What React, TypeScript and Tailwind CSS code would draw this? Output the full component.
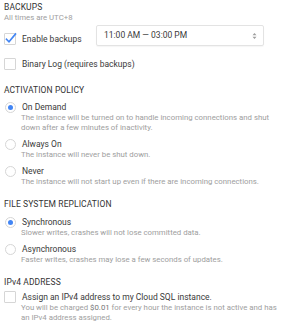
import React from 'react'

const Checkbox = ({ checked }: { checked?: boolean }) => (
  <svg width="13" height="13" viewBox="0 0 13 13" className="shrink-0 overflow-visible">
    <rect x="0.5" y="1.5" width="11" height="11" rx="0.5" fill="white" stroke="#d6d6d6" />
    {checked && (
      <path d="M2.5 7.2 L5 9.8 L11.5 2" fill="none" stroke="#4285f4" strokeWidth="1.6" strokeLinecap="square" />
    )}
  </svg>
)

const Radio = ({ checked }: { checked?: boolean }) => (
  <span className="flex h-[11px] w-[11px] shrink-0 items-center justify-center rounded-full border border-[#d6d6d6] bg-white">
    {checked && <span className="h-[5px] w-[5px] rounded-full bg-[#4285f4]" />}
  </span>
)

const Header = ({ children, className = '' }: { children: React.ReactNode; className?: string }) => (
  <div className={`text-[8.5px] leading-[11px] tracking-[0.1px] text-[#333] ${className}`}>{children}</div>
)

const Desc = ({ children, className = '' }: { children: React.ReactNode; className?: string }) => (
  <p className={`pl-[17px] text-[7.8px] leading-[10px] text-[#9e9e9e] ${className}`}>{children}</p>
)

const Option = ({ label, desc, checked, className = '' }: { label: string; desc: React.ReactNode; checked?: boolean; className?: string }) => (
  <div className={className}>
    <div className="flex items-center gap-[6px] pl-[1px]">
      <Radio checked={checked} />
      <span className="text-[8.5px] leading-[12px] text-[#3a3a3a]">{label}</span>
    </div>
    <Desc>{desc}</Desc>
  </div>
)

export default function App() {
  return (
    <div className="h-[330px] w-[284px] overflow-hidden bg-white pl-[4px] pt-[2px] font-['Roboto',sans-serif]">
      <Header>BACKUPS</Header>
      <div className="text-[7.8px] leading-[10px] text-[#9e9e9e]">All times are UTC+8</div>

      <div className="mt-[2px] flex items-start">
        <div className="mt-[7px] flex w-[92px] items-center gap-[5px]">
          <Checkbox checked />
          <span className="text-[8.5px] leading-[12px] text-[#3a3a3a]">Enable backups</span>
        </div>
        <div className="flex h-[21px] w-[168px] items-center justify-between rounded-[2px] border border-[#e3e3e3] pl-[7px] pr-[6px] shadow-[0_1px_1px_rgba(0,0,0,0.04)]">
          <span className="text-[8.5px] text-[#3a3a3a]">11:00 AM — 03:00 PM</span>
          <svg width="5" height="8" viewBox="0 0 5 8">
            <path d="M0.5 3.2 L2.5 1 L4.5 3.2 Z M0.5 4.8 L2.5 7 L4.5 4.8 Z" fill="#9e9e9e" />
          </svg>
        </div>
      </div>

      <div className="mt-[11px] flex items-center gap-[5px]">
        <Checkbox />
        <span className="text-[8.5px] leading-[12px] text-[#3a3a3a]">Binary Log (requires backups)</span>
      </div>

      <Header className="mt-[15px]">ACTIVATION POLICY</Header>
      <Option
        className="mt-[5px]"
        checked
        label="On Demand"
        desc="The instance will be turned on to handle incoming connections and shut down after a few minutes of inactivity."
      />
      <Option className="mt-[5px]" label="Always On" desc="The instance will never be shut down." />
      <Option
        className="mt-[5px]"
        label="Never"
        desc="The instance will not start up even if there are incoming connections."
      />

      <Header className="mt-[12px]">FILE SYSTEM REPLICATION</Header>
      <Option
        className="mt-[6px]"
        checked
        label="Synchronous"
        desc="Slower writes, crashes will not lose committed data."
      />
      <Option
        className="mt-[5px]"
        label="Asynchronous"
        desc="Faster writes, crashes may lose a few seconds of updates."
      />

      <Header className="mt-[12px]">IPv4 ADDRESS</Header>
      <div className="mt-[2px] flex items-center gap-[5px]">
        <Checkbox />
        <span className="text-[8.5px] leading-[12px] text-[#3a3a3a]">Assign an IPv4 address to my Cloud SQL instance.</span>
      </div>
      <Desc className="pr-[4px]">
        You will be charged <b className="font-normal text-[#757575]">$0.01</b> for every hour the instance is not active and has an IPv4 address assigned.
      </Desc>
    </div>
  )
}
